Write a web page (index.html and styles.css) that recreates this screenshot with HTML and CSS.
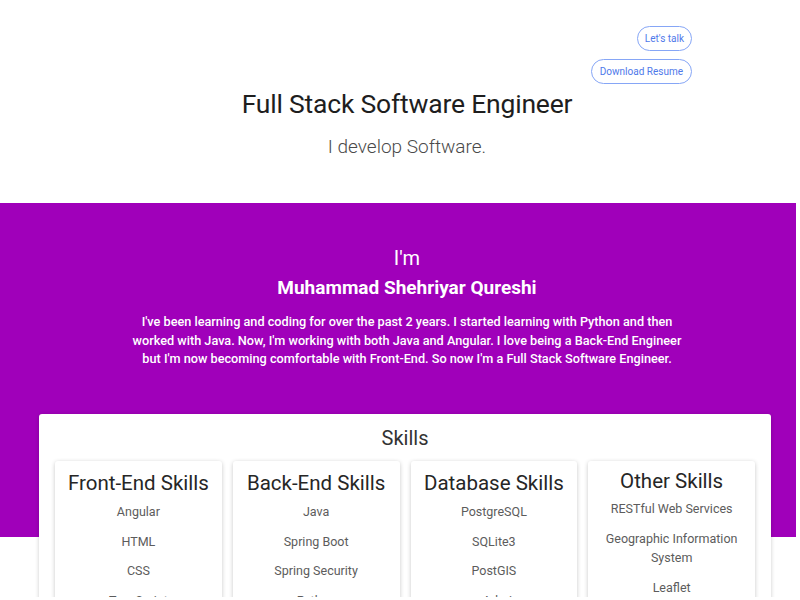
FILE: index.html
```html
<!DOCTYPE html>
<html>
<head>
<meta charset="utf-8">
<link rel="stylesheet" href="styles.css">
</head>
<body>
<header class="top">
  <div class="actions">
    <a class="pill pill-talk">Let's talk</a>
    <a class="pill pill-resume">Download Resume</a>
  </div>
  <h1 class="title">Full Stack Software Engineer</h1>
  <p class="subtitle">I develop Software.</p>
</header>
<section class="band">
  <h2 class="im">I'm</h2>
  <h3 class="name">Muhammad Shehriyar Qureshi</h3>
  <p class="about">I've been learning and coding for over the past 2 years. I started learning with Python and then worked with Java. Now, I'm working with both Java and Angular. I love being a Back-End Engineer but I'm now becoming comfortable with Front-End. So now I'm a Full Stack Software Engineer.</p>
</section>
<section class="skills">
  <h2 class="skills-title">Skills</h2>
  <div class="skill-grid">
    <div class="skill-card">
      <h3 class="skill-head">Front-End Skills</h3>
      <ul class="skill-list">
        <li>Angular</li><li>HTML</li><li>CSS</li><li>TypeScript</li>
      </ul>
    </div>
    <div class="skill-card">
      <h3 class="skill-head">Back-End Skills</h3>
      <ul class="skill-list">
        <li>Java</li><li>Spring Boot</li><li>Spring Security</li><li>Python</li>
      </ul>
    </div>
    <div class="skill-card">
      <h3 class="skill-head">Database Skills</h3>
      <ul class="skill-list">
        <li>PostgreSQL</li><li>SQLite3</li><li>PostGIS</li><li>pgAdmin</li>
      </ul>
    </div>
    <div class="skill-card">
      <h3 class="skill-head head-other">Other Skills</h3>
      <ul class="skill-list list-other">
        <li>RESTful Web Services</li><li>Geographic Information System</li><li>Leaflet</li><li>Git</li>
      </ul>
    </div>
  </div>
</section>
</body>
</html>
```
FILE: styles.css
```css
html, body {
  margin: 0;
  padding: 0;
  background: #ffffff;
  font-family: Roboto, "Liberation Sans", sans-serif;
}
body {
  height: 597px;
  overflow: hidden;
}
.top {
  padding: 26px 0 0 14px;
  text-align: center;
}
.actions {
  display: flex;
  flex-direction: column;
  align-items: flex-end;
  gap: 8px;
  padding-right: 108px;
}
.pill {
  display: inline-flex;
  align-items: center;
  justify-content: center;
  height: 23px;
  border: 1px solid #86a6f6;
  border-radius: 13px;
  color: #4f79ea;
  font-size: 10px;
  padding: 0 7px;
}
.pill-resume {
  padding: 0 8px;
}
.title {
  margin: 4px 0 0;
  font-size: 26.5px;
  font-weight: 400;
  color: #1e1e1e;
  line-height: 32px;
  letter-spacing: -0.2px;
}
.subtitle {
  margin: 15px 0 0;
  font-size: 19px;
  font-weight: 300;
  color: #4a4a4a;
  line-height: 24px;
}
.band {
  margin-top: 44px;
  width: 778px;
  padding: 42px 0 0 18px;
  height: 292px;
  background: #a000ba;
  color: #ffffff;
  text-align: center;
}
.im {
  margin: 0;
  font-size: 20px;
  font-weight: 400;
  line-height: 26px;
}
.name {
  margin: 4px 0 0;
  font-size: 19px;
  font-weight: 700;
  line-height: 26px;
}
.about {
  margin: 12px auto 0;
  width: 550px;
  font-size: 12.7px;
  font-weight: 500;
  line-height: 18.5px;
  letter-spacing: 0;
}
.skills {
  position: relative;
  margin: -123px 0 0 39px;
  width: 732px;
  background: #ffffff;
  border-radius: 3px;
  box-shadow: 0 1px 4px rgba(0,0,0,0.2);
  padding: 10px 16px 20px;
  box-sizing: border-box;
}
.skills-title {
  margin: 0;
  text-align: center;
  font-size: 20px;
  font-weight: 400;
  line-height: 28px;
  color: #333;
}
.skill-grid {
  margin-top: 9px;
  display: grid;
  grid-template-columns: repeat(4, 1fr);
  gap: 11px;
}
.skill-card {
  background: #ffffff;
  border-radius: 3px;
  box-shadow: 0 1px 4px rgba(0,0,0,0.22);
  padding: 10px 8px 12px;
  text-align: center;
}
.skill-head {
  margin: 0;
  font-size: 20.5px;
  font-weight: 400;
  line-height: 24px;
  color: #262626;
}
.head-other {
  margin-top: -2px;
}
.skill-list {
  list-style: none;
  margin: 7px 0 0;
  padding: 0;
  display: flex;
  flex-direction: column;
  gap: 10.5px;
}
.list-other {
  margin-top: 6px;
  gap: 11px;
}
.skill-list li {
  font-size: 12.5px;
  line-height: 19px;
  color: #5c5c5c;
}
```
